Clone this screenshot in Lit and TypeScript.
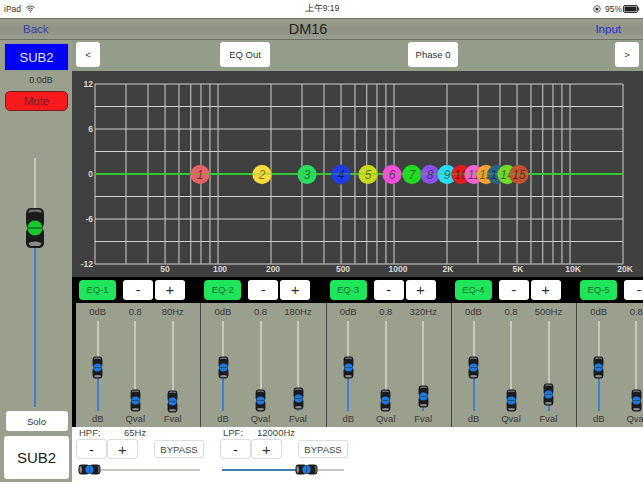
import { LitElement, html, css, svg } from "lit";
import { customElement } from "lit/decorators.js";

const X = (f: number) => 95 + 176 * Math.log10(f / 20);
const FREQS = [20,30,40,50,60,70,80,90,100,200,300,400,500,600,700,800,900,1000,2000,3000,4000,5000,6000,7000,8000,9000,10000,20000];
const FLABELS: [string, number][] = [["50",165],["100",220],["200",273],["500",343],["1000",398],["2K",448],["5K",518],["10K",573],["20K",625]];
const BALLS: [number, string][] = [[200,"#e26467"],[262,"#ffdb3e"],[307,"#2bdc5e"],[341,"#1c3de6"],[368,"#c6dc20"],[392,"#f24fdc"],[412,"#1fdc22"],[430,"#8b52ea"],[447,"#2adcf2"],[461,"#e01c1c"],[474,"#f264d4"],[486,"#f0a432"],[497,"#2b6286"],[507,"#72da2a"],[519,"#c25232"]];
const CH = [
  { n: "EQ-1", f: "80Hz", t: [34.5, 67.5, 69] },
  { n: "EQ-2", f: "180Hz", t: [34.5, 67.5, 66] },
  { n: "EQ-3", f: "320Hz", t: [34.5, 67.5, 64] },
  { n: "EQ-4", f: "500Hz", t: [34.5, 67.5, 62] },
  { n: "EQ-5", f: "800Hz", t: [34.5, 67.5, 62] },
];
const PANELS = [
  { n: "HPF:", v: "65Hz", cls: "bname", fill: 0, pos: 0 },
  { n: "LPF:", v: "12000Hz", cls: "bname narrow", fill: 84, pos: 73 },
];

function fader(color: string, cls: string, top?: number) {
  return svg`<svg class=${cls} style=${top === undefined ? "" : `top:${top}px`} viewBox="0 0 20 42">
    <path d="M5 1H15Q19 2 19 7V15Q19 19 17 21Q19 23 19 27V36Q19 40 15 41H5Q1 40 1 36V27Q1 23 3 21Q1 19 1 15V7Q1 2 5 1Z" fill="#1b1b1d"/>
    <path d="M3.5 6Q3.5 3 6 2.6H14Q16.5 3 16.5 6Q10 3.6 3.5 6Z" fill="#6a6c6d"/>
    <path d="M3.5 36Q10 33 16.5 36Q16 38.6 14 39H6Q4 38.6 3.5 36Z" fill="#8a8c8c"/>
    <circle cx="10" cy="21" r="7.5" fill=${color}/>
    <rect x="2.5" y="20.4" width="15" height="1.2" fill="#15301a" opacity=".75"/>
  </svg>`;
}

@customElement("app-root")
export class AppRoot extends LitElement {
  static styles = css`
    :host { display: block; width: 643px; height: 482px; overflow: hidden; font-family: "Liberation Sans", Arial, sans-serif; color: #333; background: #fff; }
    .status { height: 18px; display: grid; grid-template-columns: 1fr auto 1fr; align-items: center; font-size: 8.5px; padding: 0 3px 0 4px; box-sizing: border-box; color: #333; }
    .st-l { display: flex; align-items: center; gap: 5px; }
    .st-r { display: flex; align-items: center; justify-content: flex-end; gap: 1px; }
    .dot { margin-right: 3px; }
    .batt { display: block; }
    .nav { height: 22px; box-sizing: border-box; border-top: 1px solid #6f726b; border-bottom: 1px solid #6a6e62; background: linear-gradient(#9a9d90, #8f9385 55%, #9a9d90); display: grid; grid-template-columns: 1fr auto 1fr; align-items: center; font-size: 11.5px; }
    .nav .back { color: #3a3cb4; padding-left: 23px; }
    .nav .title { font-size: 14.5px; color: #222; padding-right: 27px; }
    .nav .input { color: #2c2ed0; text-align: right; padding-right: 22px; }
    .body { display: flex; height: 442px; }
    .side { width: 72px; flex: none; background: #9a9f8e; box-sizing: border-box; padding: 4px 4px 3px 5px; display: flex; flex-direction: column; align-items: center; }
    .sub { width: 63px; height: 26px; background: #0000fa; color: #e4e4f6; font-size: 13px; display: flex; align-items: center; justify-content: center; box-shadow: 0 0 1px #668; }
    .gain { font-size: 9px; margin-top: 4px; height: 12px; line-height: 12px; color: #333; padding-left: 9px; }
    .mute { width: 63px; height: 20px; margin-top: 5px; box-sizing: border-box; background: #fa1a1e; border: 1px solid #7c1c1c; border-radius: 5px; color: #6d1a1e; font-size: 11.5px; display: flex; align-items: center; justify-content: center; }
    .mtrack { position: relative; flex: 1; width: 2px; margin: 47px 0 4px -4px; background: #c8c8c4; }
    .mfill { position: absolute; left: 0; right: 0; bottom: 0; background: #3f7fd0; }
    .bigthumb { position: absolute; left: -9px; top: 49px; width: 20px; height: 42px; }
    .solo { width: 62px; height: 20px; background: #fff; border-radius: 3px; font-size: 9.5px; display: flex; align-items: center; justify-content: center; flex: none; }
    .big { width: 65px; height: 43px; margin-top: 5px; background: #fff; border-radius: 3px; font-size: 15px; color: #222; display: flex; align-items: center; justify-content: center; flex: none; }
    .main { flex: 1; min-width: 0; display: flex; flex-direction: column; overflow: hidden; }
    .top { height: 31px; flex: none; background: #949c8a; display: flex; align-items: center; padding: 0 0 2px 4px; box-sizing: border-box; }
    .tbtn { background: #fff; border-radius: 3px; height: 25px; font-size: 9.5px; display: flex; align-items: center; justify-content: center; color: #333; flex: none; }
    .nbtn { width: 24px; }
    .wbtn { width: 50px; }
    .m1 { margin-left: 120px; }
    .m2 { margin-left: 138px; }
    .m3 { margin-left: 157px; }
    .graph { height: 206px; flex: none; display: block; background: #404040; }
    .graph text { font-family: "Liberation Sans", Arial, sans-serif; }
    .axis { font-size: 8.5px; font-weight: 700; fill: #d8d8d8; }
    .bn { font-size: 12px; font-style: italic; fill: #000; fill-opacity: .5; }
    .strip { height: 26px; flex: none; background: #000; display: flex; padding-left: 4px; }
    .sc { width: 125.25px; flex: none; box-sizing: border-box; display: flex; align-items: center; padding: 0 0 1px 3px; }
    .eq { width: 37px; height: 20px; background: #1fe55a; border-radius: 4px; color: #0f6e33; font-size: 9.5px; display: flex; align-items: center; justify-content: center; margin-right: 7px; flex: none; }
    .pm { width: 30px; height: 20px; background: #fff; border-radius: 3px; margin-right: 2px; font-size: 15px; color: #333; display: flex; align-items: center; justify-content: center; flex: none; }
    .rows { height: 124px; flex: none; background: #000; display: flex; padding-left: 4px; }
    .ch { width: 125.25px; flex: none; box-sizing: border-box; background: #9a9f8e; border-right: 1px solid #444; display: grid; grid-template-columns: repeat(3, 37.5px); padding-left: 3px; }
    .col { display: flex; flex-direction: column; align-items: center; font-size: 9.5px; color: #3a3a3a; }
    .val { height: 12px; line-height: 12px; margin-top: 3px; white-space: nowrap; }
    .track { position: relative; flex: 1; width: 2px; margin: 3px 0 1px; background: #c6c6c2; }
    .fill { position: absolute; left: 0; right: 0; bottom: 0; background: #3f7fd0; }
    .thumb { position: absolute; left: -4.5px; width: 11px; height: 23px; }
    .lab { height: 13px; line-height: 13px; margin-bottom: 2px; }
    .bottom { flex: 1; background: #fff; display: flex; padding: 0 0 0 4px; gap: 15px; }
    .bp { width: 129px; flex: none; font-size: 9.5px; color: #444; }
    .bhead { display: flex; height: 12px; line-height: 12px; padding-left: 3px; }
    .bname { width: 45px; }
    .narrow { width: 34px; }
    .bctl { display: flex; align-items: center; }
    .wb { width: 31px; height: 20px; box-sizing: border-box; border: 1px solid #dcdcdc; border-radius: 3px; font-size: 15px; display: flex; align-items: center; justify-content: center; color: #333; }
    .byp { width: 50px; height: 18px; box-sizing: border-box; border: 1px solid #dcdcdc; border-radius: 3px; font-size: 9.5px; display: flex; align-items: center; justify-content: center; color: #444; margin-left: 16px; flex: none; }
    .hs { position: relative; height: 2px; margin-top: 10px; margin-left: 2px; width: 122px; background: #c6c6c2; }
    .hfill { position: absolute; left: 0; top: 0; bottom: 0; background: #3f7fa8; }
    .hthumb { position: absolute; top: -5px; width: 23px; height: 11px; }
    .hthumb svg { position: absolute; left: 6px; top: -6px; width: 11px; height: 23px; transform: rotate(90deg); }
  `;

  private graph() {
    const ys = [84, 106.5, 129, 151.5, 174, 196.5, 219, 241.5, 264];
    return html`<svg class="graph" width="571" height="206" viewBox="72 71 571 206">
      ${ys.map((y) => svg`<line x1="95" x2="623" y1=${y} y2=${y} stroke="#cfcfcf" stroke-width="1"/>`)}
      ${FREQS.map((f) => svg`<line x1=${X(f)} x2=${X(f)} y1="84" y2="264" stroke="#cfcfcf" stroke-width="1"/>`)}
      ${[["12",84],["6",129],["0",174],["-6",219],["-12",264]].map(([t, y]) => svg`<text class="axis" x="93" y=${(y as number) + 3} text-anchor="end">${t}</text>`)}
      ${FLABELS.map(([t, x]) => svg`<text class="axis" x=${x} y="272" text-anchor="middle">${t}</text>`)}
      <line x1="95" x2="623" y1="174" y2="174" stroke="#35c835" stroke-width="2"/>
      ${BALLS.map(([x, c], i) => svg`<circle cx=${x} cy="174.5" r="9.7" fill=${c} stroke="#333" stroke-opacity=".25" stroke-width=".6"/>
        <line x1=${x - 9.5} x2=${x + 9.5} y1="174" y2="174" stroke="#5cc43c" stroke-opacity=".45" stroke-width="1.4"/>
        <text class="bn" x=${x} y="179" text-anchor="middle">${i + 1}</text>`)}
    </svg>`;
  }

  private vcol(val: string, lab: string, top: number) {
    return html`<div class="col">
      <div class="val">${val}</div>
      <div class="track">
        <div class="fill" style="height:${Math.max(91 - top - 12, 0)}px"></div>
        ${fader("#1f78e0", "thumb", top)}
      </div>
      <div class="lab">${lab}</div>
    </div>`;
  }

  render() {
    return html`
      <div class="status">
        <div class="st-l">iPad
          <svg width="9" height="8" viewBox="0 0 11 9"><path d="M.5 3a7 7 0 0 1 10 0M2.2 4.8a4.6 4.6 0 0 1 6.6 0M3.9 6.4a2.3 2.3 0 0 1 3.2 0" fill="none" stroke="#333" stroke-width="1.1"/><circle cx="5.5" cy="8" r=".9" fill="#333"/></svg>
        </div>
        <div>上午9:19</div>
        <div class="st-r">
          <svg class="dot" width="8" height="8" viewBox="0 0 8 8"><circle cx="4" cy="4" r="3.3" fill="none" stroke="#444" stroke-width=".8"/><circle cx="4" cy="4" r="1.6" fill="#333"/></svg>
          <span>95%</span>
          <svg class="batt" width="17" height="8" viewBox="0 0 17 8"><rect x=".5" y=".5" width="14" height="7" rx="1.5" fill="none" stroke="#333"/><rect x="1.5" y="1.5" width="12" height="5" fill="#222"/><rect x="15" y="2.5" width="1.2" height="3" fill="#333"/></svg>
        </div>
      </div>
      <div class="nav">
        <div class="back">Back</div>
        <div class="title">DM16</div>
        <div class="input">Input</div>
      </div>
      <div class="body">
        <div class="side">
          <div class="sub">SUB2</div>
          <div class="gain">0.0dB</div>
          <div class="mute">Mute</div>
          <div class="mtrack">
            <div class="mfill" style="height:170px"></div>
            ${fader("#18c92e", "bigthumb")}
          </div>
          <div class="solo">Solo</div>
          <div class="big">SUB2</div>
        </div>
        <div class="main">
          <div class="top">
            <div class="tbtn nbtn">&lt;</div>
            <div class="tbtn wbtn m1">EQ Out</div>
            <div class="tbtn wbtn m2">Phase 0</div>
            <div class="tbtn nbtn m3">&gt;</div>
          </div>
          ${this.graph()}
          <div class="strip">
            ${CH.map((c) => html`<div class="sc"><div class="eq">${c.n}</div><div class="pm">-</div><div class="pm">+</div></div>`)}
          </div>
          <div class="rows">
            ${CH.map((c) => html`<div class="ch">
              ${this.vcol("0dB", "dB", c.t[0])}
              ${this.vcol("0.8", "Qval", c.t[1])}
              ${this.vcol(c.f, "Fval", c.t[2])}
            </div>`)}
          </div>
          <div class="bottom">
            ${PANELS.map((p) => html`<div class="bp">
              <div class="bhead"><div class=${p.cls}>${p.n}</div><div>${p.v}</div></div>
              <div class="bctl"><div class="wb">-</div><div class="wb">+</div><div class="byp">BYPASS</div></div>
              <div class="hs">
                <div class="hfill" style="width:${p.fill}px"></div>
                <div class="hthumb" style="left:${p.pos}px">${fader("#1f78e0", "")}</div>
              </div>
            </div>`)}
          </div>
        </div>
      </div>
    `;
  }
}
